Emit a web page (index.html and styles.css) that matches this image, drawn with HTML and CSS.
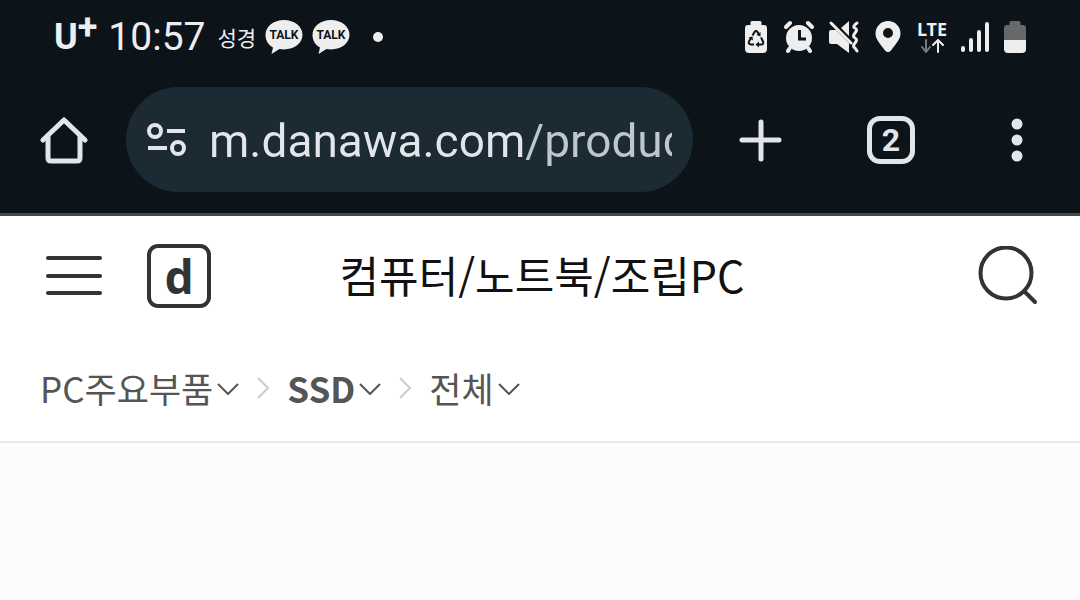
FILE: index.html
```html
<!DOCTYPE html>
<html lang="ko">
<head>
    <meta charset="UTF-8">
    <meta name="viewport" content="width=device-width, initial-scale=1">
    <title>컴퓨터/노트북/조립PC</title>
    <link rel="stylesheet" href="styles.css">
</head>
<body>
<div class="browser">
    <div class="status-bar">
        <div class="carrier"><span>U</span><span class="plus">+</span></div>
        <div class="clock">10:57</div>
        <div class="notices">
            <span class="notice-text">성경</span>
            <svg class="talk" width="38" height="36" viewBox="0 0 38 36">
                <path d="M19 1C8.500 1 .5 7.500 .5 16c0 5.500 3 10 7.500 12.500L6.500 35l8-5c1.500.3 3 .4 4.500.4 10.500 0 18.500-6.400 18.500-14.600S29.500 1 19 1z"/>
                <text x="19" y="20" text-anchor="middle">TALK</text>
            </svg>
            <svg class="talk" width="38" height="36" viewBox="0 0 38 36">
                <path d="M19 1C8.500 1 .5 7.500 .5 16c0 5.500 3 10 7.500 12.500L6.500 35l8-5c1.500.3 3 .4 4.500.4 10.500 0 18.500-6.400 18.500-14.600S29.500 1 19 1z"/>
                <text x="19" y="20" text-anchor="middle">TALK</text>
            </svg>
            <span class="dot"></span>
        </div>
        <div class="indicators">
            <!-- battery saver -->
            <svg width="32" height="36" viewBox="0 0 32 36">
                <path fill="#eee" d="M12 2h8q1.500 0 1.500 1.500V6H24q3 0 3 3v21q0 4-4 4H9q-4 0-4-4V9q0-3 3-3h2.500V3.500Q10.500 2 12 2z"/>
                <g fill="none" stroke="#0c1319" stroke-width="2">
                    <path d="M12.500 16.500l2-3.500q1.500-2 3 0l1.500 2.500M21 18.500l2 4q1 3-2 3h-3.500M14 25.500h-3q-3-.5-2-3l2-3.500"/>
                </g>
                <path fill="#0c1319" d="M20.500 13v4.500l-4-1.500zM19 22.500v6l-3.500-3zM8.500 18.500l4-1 .5 4z"/>
            </svg>
            <!-- alarm -->
            <svg width="32" height="36" viewBox="0 0 32 36">
                <circle cx="15" cy="19" r="13" fill="#eee"/>
                <path fill="none" stroke="#eee" stroke-width="4" stroke-linecap="round" d="M2 8l4-4M24 4l4 4M5.500 29.500L4 32M24.500 29.500L26 32"/>
                <path fill="none" stroke="#0c1319" stroke-width="3" d="M15.500 11v9H22"/>
            </svg>
            <!-- vibrate -->
            <svg width="32" height="36" viewBox="0 0 32 36">
                <path fill="#eee" d="M1 13q0-2 2-2h5l13 13v10L9 25H3q-2 0-2-2zM13 9l8-7v15z"/>
                <path fill="none" stroke="#eee" stroke-width="3" stroke-linecap="round" d="M3 4l20 20"/>
                <path fill="none" stroke="#eee" stroke-width="3" stroke-linecap="round" stroke-linejoin="round" d="M29 4q-5 3.500-2 5t0 5 0 5 0 5 0 5l2 3"/>
            </svg>
            <!-- location -->
            <svg width="32" height="36" viewBox="0 0 32 36">
                <path fill="#eee" fill-rule="evenodd" d="M16 2C9 2 3.500 7.500 3.500 14.500c0 5.500 4 9.500 9.500 17q3 3 6 0c5.500-7.500 9.500-11.500 9.500-17C28.500 7.500 23 2 16 2zm0 7a5 5 0 1 1 0 10 5 5 0 0 1 0-10z"/>
            </svg>
            <div class="network">
                <span>LTE</span>
                <svg width="24" height="14" viewBox="0 0 24 14" fill="none" stroke-width="2" stroke-linecap="round" stroke-linejoin="round">
                    <path stroke="#777b7e" d="M6 1v11M2 8l4 5 4-5"/>
                    <path stroke="#eee" d="M18 13V1M13 6l5-5 5 5"/>
                </svg>
            </div>
            <!-- signal -->
            <svg width="32" height="36" viewBox="0 0 32 36">
                <path fill="none" stroke="#eee" stroke-width="4" stroke-linecap="round" d="M3 29v2M11 21v10M19 13v18M27 5v26"/>
            </svg>
            <!-- battery -->
            <svg width="22" height="36" viewBox="0 0 22 36">
                <path fill="#66696b" d="M7 2h8q1.500 0 1.500 1.500V6H19q3 0 3 3v12H0V9q0-3 3-3h2.500V3.500Q5.500 2 7 2z"/>
                <path fill="#eee" d="M0 21h22v9q0 4-4 4H4q-4 0-4-4z"/>
            </svg>
        </div>
    </div>

    <div class="toolbar">
        <button type="button" aria-label="홈">
            <svg width="48" height="48" viewBox="0 0 48 48" fill="none" stroke="#e2e6ea" stroke-width="5" stroke-linecap="round" stroke-linejoin="round">
                <path d="M3 24L24 4l21 20"/>
                <path d="M8 20v22q0 3 3 3h26q3 0 3-3V20"/>
            </svg>
        </button>
        <div class="address">
            <svg width="40" height="34" viewBox="0 0 40 34" fill="none" stroke="#e2e6ea" stroke-width="4">
                <circle cx="8" cy="8" r="6"/>
                <path d="M20 8h18M1 25h19"/>
                <circle cx="31" cy="25" r="6"/>
            </svg>
            <input type="text" value="m.danawa.com/product" aria-label="주소">
        </div>
        <div class="actions">
            <button type="button" aria-label="새 탭">
                <svg width="48" height="48" viewBox="0 0 48 48" fill="none" stroke="#e2e6ea" stroke-width="5" stroke-linecap="round">
                    <path d="M24 6v37M5 24h37"/>
                </svg>
            </button>
            <button type="button" class="tabs" aria-label="탭 2개">2</button>
            <button type="button" aria-label="메뉴">
                <svg width="40" height="48" viewBox="0 0 40 48" fill="#e2e6ea">
                    <circle cx="20" cy="8" r="5.500"/>
                    <circle cx="20" cy="24" r="5.500"/>
                    <circle cx="20" cy="40" r="5.500"/>
                </svg>
            </button>
        </div>
    </div>
</div>

<header class="site-header">
    <div class="left">
        <button type="button" aria-label="전체 메뉴">
            <svg width="60" height="48" viewBox="0 0 60 48" fill="none" stroke="#333" stroke-width="4" stroke-linecap="round">
                <path d="M2 6h52M2 24h52M2 41h52"/>
            </svg>
        </button>
        <a href="#" class="logo" aria-label="다나와">d</a>
    </div>
    <h1>컴퓨터/노트북/조립PC</h1>
    <button type="button" class="search" aria-label="검색">
        <svg width="60" height="60" viewBox="0 0 60 60" fill="none" stroke="#333" stroke-width="4" stroke-linecap="round">
            <circle cx="28" cy="27" r="25.500"/>
            <path d="M47 46l10 10"/>
        </svg>
    </button>
</header>

<nav class="category">
    <button type="button">PC주요부품
        <svg class="arrow" width="22" height="14" viewBox="0 0 22 14"><path d="M1 3l10 10L21 3"/></svg>
    </button>
    <svg class="next" width="14" height="22" viewBox="0 0 14 22"><path d="M2 1l10 10L2 21"/></svg>
    <button type="button" class="current">SSD
        <svg class="arrow" width="22" height="14" viewBox="0 0 22 14"><path d="M1 3l10 10L21 3"/></svg>
    </button>
    <svg class="next" width="14" height="22" viewBox="0 0 14 22"><path d="M2 1l10 10L2 21"/></svg>
    <button type="button">전체
        <svg class="arrow" width="22" height="14" viewBox="0 0 22 14"><path d="M1 3l10 10L21 3"/></svg>
    </button>
</nav>
</body>
</html>
```
FILE: styles.css
```css
* {
    box-sizing: border-box;
}

body {
    margin: 0;
    background-color: #fcfcfc;
    font-family: "Noto Sans CJK KR", sans-serif;
}

svg {
    display: block;
    flex: none;
}

button {
    display: flex;
    align-items: center;
    padding: 0;
    border: 0;
    background: none;
    color: inherit;
    font: inherit;
}

/* browser */
.browser {
    border-bottom: 3px solid #44464a;
    background-color: #0c1319;
    color: #eee;
}

.status-bar {
    display: flex;
    align-items: center;
    height: 74px;
    padding: 0 54px;
}

.carrier {
    display: flex;
    font: bold 36px/44px Roboto, sans-serif;
}

.carrier .plus {
    line-height: 24px;
}

.clock {
    margin-left: 11px;
    font: 39px/44px Roboto, sans-serif;
}

.notices {
    display: flex;
    align-items: center;
    gap: 9px;
    margin-left: 12px;
}

.notice-text {
    font-size: 21px;
    line-height: 30px;
}

.talk path {
    fill: #eee;
}

.talk text {
    fill: #0c1319;
    font: bold 12px Roboto, sans-serif;
}

.dot {
    width: 10px;
    height: 10px;
    margin-left: 14px;
    border-radius: 50%;
    background-color: #eee;
}

.indicators {
    display: flex;
    gap: 12px;
    margin-left: auto;
}

.network {
    display: flex;
    flex-direction: column;
    align-items: center;
    width: 32px;
    font: bold 18px/20px "Noto Sans", sans-serif;
}

.toolbar {
    display: flex;
    align-items: center;
    padding: 13px 43px 21px 40px;
}

.address {
    display: flex;
    flex: 1;
    align-items: center;
    gap: 22px;
    min-width: 0;
    height: 105px;
    margin: 0 44px 0 38px;
    padding: 0 21px;
    border-radius: 53px;
    background-color: #1b2a33;
}

/* host is brighter than the path */
.address input {
    flex: 1;
    min-width: 0;
    padding: 3px 0 0;
    border: 0;
    outline: 0;
    background: linear-gradient(to right, #e2e6ea 316px, #bdc7d0 316px);
    -webkit-background-clip: text;
    background-clip: text;
    color: #e2e6ea;
    -webkit-text-fill-color: transparent;
    font: 46px/60px Roboto, sans-serif;
}

.actions {
    display: flex;
    gap: 82px;
}

.tabs {
    justify-content: center;
    width: 48px;
    height: 48px;
    border: 5px solid #e2e6ea;
    border-radius: 13px;
    color: #e2e6ea;
    font: bold 32px/38px Roboto, sans-serif;
}

/* site */
.site-header {
    display: grid;
    grid-template-columns: 1fr auto 1fr;
    align-items: center;
    height: 120px;
    padding: 0 42px 0 46px;
    background-color: #fff;
}

.left {
    display: flex;
    align-items: center;
    gap: 41px;
}

.logo {
    width: 64px;
    height: 64px;
    border: 4px solid #333;
    border-radius: 11px;
    color: #333;
    font: bold 46px/56px "Noto Sans", sans-serif;
    text-align: center;
    text-decoration: none;
}

h1 {
    margin: 0;
    padding-bottom: 4px;
    color: #111;
    font-size: 43px;
    font-weight: normal;
    line-height: 60px;
}

.search {
    justify-self: end;
}

.category {
    display: flex;
    align-items: center;
    gap: 17px;
    height: 107px;
    padding: 0 40px 2px;
    border-bottom: 2px solid #e8e8e8;
    background-color: #fff;
    color: #555;
    font-size: 35px;
    line-height: 50px;
}

.category button {
    gap: 4px;
}

.category .current {
    font-weight: bold;
}

.arrow,
.next {
    fill: none;
    stroke: #555;
    stroke-width: 2;
}

.next {
    stroke: #ccc;
}
```
